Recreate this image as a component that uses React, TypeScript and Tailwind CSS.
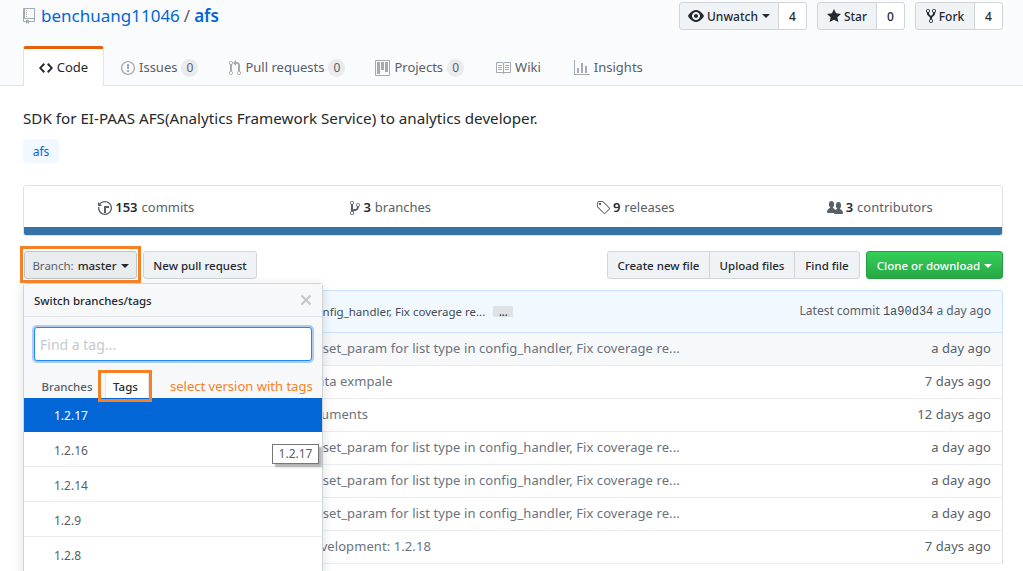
import type { ReactNode } from "react";

const paths = {
  repo: "M4 9H3V8h1v1zm0-3H3v1h1V6zm0-2H3v1h1V4zm0-2H3v1h1V2zm8-1v12c0 .55-.45 1-1 1H6v2l-1.5-1.5L3 16v-2H1c-.55 0-1-.45-1-1V1c0-.55.45-1 1-1h10c.55 0 1 .45 1 1zm-1 10H1v2h2v-1h3v1h5v-2zm0-10H2v9h9V1z",
  code: "M9.5 3L8 4.5 11.5 8 8 11.5 9.5 13 14 8 9.5 3zm-5 0L0 8l4.5 5L6 11.5 2.5 8 6 4.5 4.5 3z",
  issue: "M7 2.3c3.14 0 5.7 2.56 5.7 5.7s-2.56 5.7-5.7 5.7A5.71 5.71 0 0 1 1.3 8c0-3.14 2.56-5.7 5.7-5.7zM7 1C3.14 1 0 4.14 0 8s3.14 7 7 7 7-3.14 7-7-3.14-7-7-7zm1 3H6v5h2V4zm0 6H6v2h2v-2z",
  pull: "M11 11.28V5c-.03-.78-.34-1.47-.94-2.06C9.46 2.35 8.78 2.03 8 2H7V0L4 3l3 3V4h1c.27.02.48.11.69.31.21.2.3.42.31.69v6.28A1.993 1.993 0 0 0 10 15a1.993 1.993 0 0 0 1-3.72zm-1 2.92c-.66 0-1.2-.55-1.2-1.2 0-.65.55-1.2 1.2-1.2.65 0 1.2.55 1.2 1.2 0 .65-.55 1.2-1.2 1.2zM4 3c0-1.11-.89-2-2-2a1.993 1.993 0 0 0-1 3.72v6.56A1.993 1.993 0 0 0 2 15a1.993 1.993 0 0 0 1-3.72V4.72c.59-.34 1-.98 1-1.72zm-.8 10c0 .66-.55 1.2-1.2 1.2-.65 0-1.2-.55-1.2-1.2 0-.65.55-1.2 1.2-1.2.65 0 1.2.55 1.2 1.2zM2 4.2C1.34 4.2.8 3.65.8 3c0-.65.55-1.2 1.2-1.2.65 0 1.2.55 1.2 1.2 0 .65-.55 1.2-1.2 1.2z",
  project: "M10 12h3V2h-3v10zm-4-2h3V2H6v8zm-4 4h3V2H2v12zm-1 1h13V1H1v14zM14 0H1a1 1 0 0 0-1 1v14a1 1 0 0 0 1 1h13a1 1 0 0 0 1-1V1a1 1 0 0 0-1-1z",
  book: "M3 5h4v1H3V5zm0 3h4V7H3v1zm0 2h4V9H3v1zm11-5h-4v1h4V5zm0 2h-4v1h4V7zm0 2h-4v1h4V9zm2-6v9c0 .55-.45 1-1 1H9.5l-1 1-1-1H2c-.55 0-1-.45-1-1V3c0-.55.45-1 1-1h5.5l1 1 1-1H15c.55 0 1 .45 1 1zm-8 .5L7.5 3H2v9h6V3.5zm7-.5H9.5l-.5.5V12h6V3z",
  graph: "M16 14v1H0V0h1v14h15zM5 13H3V8h2v5zm4 0H7V3h2v10zm4 0h-2V6h2v7z",
  eye: "M8.06 2C3 2 0 8 0 8s3 6 8.06 6C13 14 16 8 16 8s-3-6-7.94-6zM8 12c-2.2 0-4-1.78-4-4 0-2.2 1.8-4 4-4 2.22 0 4 1.8 4 4 0 2.22-1.78 4-4 4zm2-4c0 1.11-.89 2-2 2-1.11 0-2-.89-2-2 0-1.11.89-2 2-2 1.11 0 2 .89 2 2z",
  star: "M14 6l-4.9-.64L7 1 4.9 5.36 0 6l3.6 3.26L2.67 14 7 11.67 11.33 14l-.93-4.74L14 6z",
  fork: "M8 1a1.993 1.993 0 0 0-1 3.72V6L5 8 3 6V4.72A1.993 1.993 0 0 0 2 1a1.993 1.993 0 0 0-1 3.72V6.5l3 3v1.78A1.993 1.993 0 0 0 5 15a1.993 1.993 0 0 0 1-3.72V9.5l3-3V4.72A1.993 1.993 0 0 0 8 1zM2 4.2C1.34 4.2.8 3.65.8 3c0-.65.55-1.2 1.2-1.2.65 0 1.2.55 1.2 1.2 0 .65-.55 1.2-1.2 1.2zm3 10c-.66 0-1.2-.55-1.2-1.2 0-.65.55-1.2 1.2-1.2.65 0 1.2.55 1.2 1.2 0 .65-.55 1.2-1.2 1.2zm3-10c-.66 0-1.2-.55-1.2-1.2 0-.65.55-1.2 1.2-1.2.65 0 1.2.55 1.2 1.2 0 .65-.55 1.2-1.2 1.2z",
  history: "M8 13H6V6h5v2H8v5zM7 1C4.81 1 2.87 2.02 1.59 3.59L0 2v4h4L2.5 4.5C3.55 3.17 5.17 2.3 7 2.3c3.14 0 5.7 2.56 5.7 5.7s-2.56 5.7-5.7 5.7A5.71 5.71 0 0 1 1.3 8c0-.34.03-.67.09-1H.08C.03 7.33 0 7.66 0 8c0 3.86 3.14 7 7 7s7-3.14 7-7-3.14-7-7-7z",
  branch: "M10 5c0-1.11-.89-2-2-2a1.993 1.993 0 0 0-1 3.72v.3c-.02.52-.23.98-.63 1.38-.4.4-.86.61-1.38.63-.83.02-1.48.16-2 .45V4.72a1.993 1.993 0 0 0-1-3.72C.88 1 0 1.89 0 3a2 2 0 0 0 1 1.72v6.56c-.59.35-1 .99-1 1.72 0 1.11.89 2 2 2 1.11 0 2-.89 2-2 0-.53-.2-1-.53-1.36.09-.06.48-.41.59-.47.25-.11.56-.17.94-.17 1.05-.05 1.95-.45 2.75-1.25S8.95 7.77 9 6.73h-.02C9.59 6.37 10 5.73 10 5zM2 1.8c.66 0 1.2.55 1.2 1.2 0 .65-.55 1.2-1.2 1.2C1.35 4.2.8 3.65.8 3c0-.65.55-1.2 1.2-1.2zm0 12.41c-.66 0-1.2-.55-1.2-1.2 0-.65.55-1.2 1.2-1.2.65 0 1.2.55 1.2 1.2 0 .65-.55 1.2-1.2 1.2zm6-8c-.66 0-1.2-.55-1.2-1.2 0-.65.55-1.2 1.2-1.2.65 0 1.2.55 1.2 1.2 0 .65-.55 1.2-1.2 1.2z",
  tag: "M7.73 1.73C7.26 1.26 6.62 1 5.96 1H3.5C2.13 1 1 2.13 1 3.5v2.47c0 .66.27 1.3.73 1.77l6.06 6.06c.39.39 1.02.39 1.41 0l4.59-4.59a.996.996 0 0 0 0-1.41L7.73 1.73zM2.38 7.09c-.31-.3-.47-.7-.47-1.13V3.5c0-.88.72-1.59 1.59-1.59h2.47c.42 0 .83.16 1.13.47l6.14 6.13-4.73 4.73-6.13-6.15zM3.01 3h2v2H3V3h.01z",
  people: "M16 12.999c0 .439-.45 1-1 1H7.995c-.539 0-.994-.447-.995-.999H1c-.54 0-1-.561-1-1 0-2.634 3-4 3-4s.229-.409 0-1c-.841-.621-1.058-.59-1-3 .058-2.419 1.367-3 2.5-3s2.442.58 2.5 3c.058 2.41-.159 2.379-1 3-.229.59 0 1 0 1s1.549.711 2.42 2.088C9.196 9.369 10 8.999 10 8.999s.229-.409 0-1c-.841-.62-1.058-.59-1-3 .058-2.419 1.367-3 2.5-3s2.437.581 2.495 3c.059 2.41-.158 2.38-1 3-.229.59 0 1 0 1s3.005 1.366 3.005 4z",
  x: "M7.48 8l3.75 3.75-1.48 1.48L6 9.48l-3.75 3.75-1.48-1.48L4.52 8 .77 4.25l1.48-1.48L6 6.52l3.75-3.75 1.48 1.48L7.48 8z",
};

function Octicon({ d, w, className }: { d: string; w: number; className?: string }) {
  return (
    <svg viewBox={`0 0 ${w} 16`} width={w} height={16} fill="currentColor" className={className}>
      <path fillRule="evenodd" d={d} />
    </svg>
  );
}

function Caret({ className }: { className?: string }) {
  return <span className={`inline-block border-x-4 border-t-4 border-x-transparent ${className}`} />;
}

function Count({ children }: { children: ReactNode }) {
  return (
    <span className="ml-[4px] flex h-[18px] min-w-[17px] items-center justify-center rounded-full bg-[#e9ebee] px-[5px] text-[12px] text-[#586069]">
      {children}
    </span>
  );
}

function Action({ d, w, label, count, caret, width }: { d: string; w: number; label: string; count: string; caret?: boolean; width: string }) {
  return (
    <div className="flex h-[28px] text-[12px] font-medium text-[#24292e]">
      <div className={`flex items-center justify-center gap-[3px] rounded-l-[3px] border border-[#d1d5da] bg-[#f0f3f6] ${width}`}>
        <Octicon d={d} w={w} />
        <span className="pt-px">{label}</span>
        {caret && <Caret className="ml-[1px] border-t-[#24292e]" />}
      </div>
      <div className="-ml-px flex w-[29px] items-center justify-center rounded-r-[3px] border border-[#d1d5da] bg-white pt-px">{count}</div>
    </div>
  );
}

const tabs = [
  { d: paths.issue, w: 14, label: "Issues", count: "0", gap: "ml-[17px]" },
  { d: paths.pull, w: 12, label: "Pull requests", count: "0", gap: "ml-[31px]" },
  { d: paths.project, w: 15, label: "Projects", count: "0", gap: "ml-[30px]" },
  { d: paths.book, w: 16, label: "Wiki", gap: "ml-[31px]" },
  { d: paths.graph, w: 16, label: "Insights", gap: "ml-[33px]" },
];

const stats = [
  { d: paths.history, w: 14, n: "153", label: "commits" },
  { d: paths.branch, w: 10, n: "3", label: "branches" },
  { d: paths.tag, w: 14, n: "9", label: "releases" },
  { d: paths.people, w: 16, n: "3", label: "contributors" },
];

const fixMsg = "Fix set_param for list type in config_handler, Fix coverage re...";

const rows = [
  { msg: fixMsg, age: "a day ago", pad: "pl-[278px]" },
  { msg: "Add data exmpale", age: "7 days ago", pad: "pl-[257px]" },
  { msg: "Update documents", age: "12 days ago", pad: "pl-[226px]" },
  { msg: fixMsg, age: "a day ago", pad: "pl-[278px]" },
  { msg: fixMsg, age: "a day ago", pad: "pl-[278px]" },
  { msg: fixMsg, age: "a day ago", pad: "pl-[278px]" },
  { msg: "Bump development: 1.2.18", age: "7 days ago", pad: "pl-[241px]" },
];

const versions = ["1.2.16", "1.2.14", "1.2.9", "1.2.8"];

function Dropdown() {
  return (
    <div className="absolute left-[23px] top-[283px] z-10 h-[300px] w-[300px] rounded-[3px] border border-[#d1d5da] bg-white shadow-[0_3px_12px_rgba(27,31,35,0.15)]">
      <div className="flex h-[33px] items-center justify-between border-b border-[#e1e4e8] bg-[#f6f8fa] pl-[10px] pr-[10px] text-[11.5px] font-medium text-[#24292e]">
        <span className="pt-px">Switch branches/tags</span>
        <Octicon d={paths.x} w={12} className="text-[#c4c8cc]" />
      </div>
      <div className="bg-[#f6f8fa] px-[10px] pb-[12px] pt-[10px]">
        <div className="flex h-[34px] items-center rounded-[3px] border border-[#2188ff] bg-white px-[5px] text-[14px] text-[#c6cace] shadow-[0_0_0_2px_rgba(3,102,214,0.3)]">
          Find a tag...
        </div>
      </div>
      <div className="flex h-[25px] items-end bg-[#f6f8fa] pl-[10px] text-[11.5px] font-medium">
        <span className="flex h-[25px] w-[66px] items-center justify-center pt-[2px] text-[#586069]">Branches</span>
        <span className="ml-[5px] flex h-[25px] w-[44px] items-center justify-center border-x border-[#e1e4e8] bg-white pr-[3px] pt-[2px] text-[#24292e]">Tags</span>
      </div>
      <div className="flex h-[34px] items-center bg-[#0366d6] pl-[30px] pt-px text-[12px] text-white">1.2.17</div>
      {versions.map((v) => (
        <div key={v} className="flex h-[35px] items-center border-b border-[#eaecef] pl-[30px] pt-[3px] text-[12px] text-[#586069]">
          {v}
        </div>
      ))}
    </div>
  );
}

export default function App() {
  return (
    <div className="relative h-[571px] w-[1023px] overflow-hidden bg-white font-['Noto_Sans','Open_Sans',sans-serif] text-[#24292e]">
      <header className="h-[86px] border-b border-[#e1e4e8] bg-[#fafbfc]">
        <div className="flex h-[46px] items-start justify-between pl-[23px] pr-[20px] pt-[2px]">
          <div className="flex h-[28px] items-center text-[17px] text-[#0366d6]">
            <Octicon d={paths.repo} w={12} className="mr-[6px] text-[#a3aab1]" />
            <span>benchuang11046</span>
            <span className="mx-[4px] text-[#586069]">/</span>
            <span className="font-semibold">afs</span>
          </div>
          <div className="flex gap-[10px]">
            <Action d={paths.eye} w={16} label="Unwatch" count="4" caret width="w-[100px]" />
            <Action d={paths.star} w={14} label="Star" count="0" width="w-[60px]" />
            <Action d={paths.fork} w={10} label="Fork" count="4" width="w-[60px]" />
          </div>
        </div>
        <nav className="flex h-[40px] pl-[23px] text-[13px] text-[#586069]">
          <div className="flex h-[40px] w-[81px] items-center justify-center gap-[4px] rounded-t-[3px] border-x border-t-[3px] border-x-[#e1e4e8] border-t-[#e36209] bg-white text-[#24292e]">
            <Octicon d={paths.code} w={14} />
            Code
          </div>
          {tabs.map((t) => (
            <div key={t.label} className={`flex h-[40px] items-center pt-[3px] ${t.gap}`}>
              <Octicon d={t.d} w={t.w} className="mr-[4px] text-[#a3aab1]" />
              {t.label}
              {t.count && <Count>{t.count}</Count>}
            </div>
          ))}
        </nav>
      </header>

      <main className="pl-[23px] pr-[20px]">
        <p className="mt-[20px] h-[24px] text-[15.2px] leading-[24px]">SDK for EI-PAAS AFS(Analytics Framework Service) to analytics developer.</p>
        <div className="mt-[9px] flex h-[24px] w-[36px] items-center justify-center rounded-[3px] bg-[#f1f8ff] pt-px text-[12px] text-[#0366d6]">afs</div>

        <section className="mt-[22px] h-[51px] overflow-hidden rounded-[3px] border border-[#dfe2e5]">
          <div className="grid h-[41px] grid-cols-4 pt-[2px] text-[13px]">
            {stats.map((s) => (
              <div key={s.label} className="flex items-center justify-center gap-[3px] text-[#586069]">
                <Octicon d={s.d} w={s.w} className="text-[#586069]" />
                <span className="font-semibold text-[#24292e]">{s.n}</span>
                <span className="ml-[1px]">{s.label}</span>
              </div>
            ))}
          </div>
          <div className="h-[8px] bg-[#3572a5]" />
        </section>

        <div className="mt-[15px] flex h-[28px] justify-between text-[11.5px] font-medium">
          <div className="flex gap-[6px]">
            <div className="ml-px flex w-[113px] items-center justify-center gap-[4px] rounded-[3px] border border-[#c0c4c8] bg-[#e9ecef] pt-px">
              <span className="font-normal text-[#586069]">Branch:</span> master
              <Caret className="border-t-[#24292e]" />
            </div>
            <div className="flex w-[114px] items-center justify-center rounded-[3px] border border-[#d1d5da] bg-[#f0f3f6] pt-px">New pull request</div>
          </div>
          <div className="flex gap-[6px]">
            <div className="flex">
              <div className="flex w-[103px] items-center justify-center rounded-l-[3px] border border-[#d1d5da] bg-[#f0f3f6] pt-px">Create new file</div>
              <div className="-ml-px flex w-[86px] items-center justify-center border border-[#d1d5da] bg-[#f0f3f6] pt-px">Upload files</div>
              <div className="-ml-px flex w-[66px] items-center justify-center rounded-r-[3px] border border-[#d1d5da] bg-[#f0f3f6] pt-px">Find file</div>
            </div>
            <div className="flex w-[137px] items-center justify-center gap-[4px] rounded-[3px] border border-[#22a03f] bg-gradient-to-b from-[#34d058] to-[#28a745] pt-px text-white">
              Clone or download
              <Caret className="border-t-white" />
            </div>
          </div>
        </div>

        <section className="mt-[11px]">
          <div className="flex h-[43px] items-center justify-between rounded-t-[3px] border border-[#c8e1ff] bg-[#f1f8ff] pr-[11px] text-[12px] text-[#586069]">
            <div className="flex items-center pl-[273px]">
              <span className="text-[11.5px] text-[#444d56]">in config_handler, Fix coverage re...</span>
              <span className="ml-[8px] flex h-[11px] w-[20px] items-center justify-center rounded-[1px] bg-[#dfe2e5] text-[10px] font-bold leading-none text-[#444d56]">...</span>
            </div>
            <div>
              Latest commit <span className="font-['Liberation_Mono',monospace] text-[#444d56]">1a90d34</span> a day ago
            </div>
          </div>
          {rows.map((r, i) => (
            <div key={i} className={`flex h-[33px] items-center justify-between border-x border-b border-x-[#dfe2e5] border-b-[#eaecef] pr-[11px] text-[13px] tracking-[0.08px] text-[#6a737d] ${i === 0 ? "bg-[#f6f8fa]" : "bg-white"}`}>
              <span className={`truncate ${r.pad}`}>{r.msg}</span>
              <span className="text-[#586069]">{r.age}</span>
            </div>
          ))}
        </section>
      </main>

      <Dropdown />

      {/* annotations pasted on top of the screenshot */}
      <div className="absolute left-[20px] top-[246px] z-20 h-[37px] w-[121px] border-[3px] border-[#f58025]" />
      <div className="absolute left-[98px] top-[370px] z-20 h-[32px] w-[54px] border-[3px] border-[#f58025]" />
      <span className="absolute left-[170px] top-[377px] z-20 text-[13px] leading-[18px] text-[#f58025]">select version with tags</span>
      <div className="absolute left-[272px] top-[444px] z-20 flex h-[20px] w-[47px] items-center justify-center border border-[#767676] bg-white text-[12px] text-[#586069] shadow-[3px_3px_2px_rgba(0,0,0,0.3)]">1.2.17</div>
    </div>
  );
}
